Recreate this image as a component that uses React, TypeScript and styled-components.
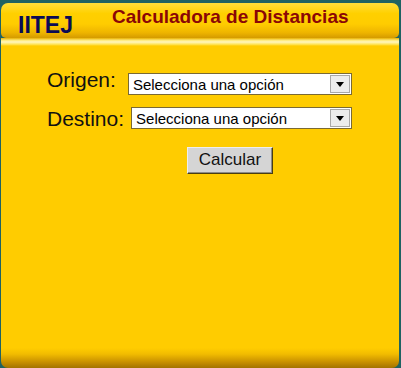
import React from 'react'
import styled, { createGlobalStyle } from 'styled-components'

//-----------------------------------------------------------------------------------------------
// global
//-----------------------------------------------------------------------------------------------
const GlobalStyle = createGlobalStyle`
  html, body {
    margin: 0;
    padding: 0;
    background: #1f6262;
  }
  body {
    font-family: "Liberation Sans", Arial, sans-serif;
  }
`

const Page = styled.div`
  width: 401px;
  height: 368px;
  box-sizing: border-box;
  padding: 3px 2px 0 1px;
  display: flex;
  flex-direction: column;
  background: #1f6262;
`

const Header = styled.div`
  height: 35px;
  display: flex;
  align-items: center;
  padding: 0 0 2px 17px;
  box-sizing: border-box;
  border-radius: 7px 7px 5px 5px;
  background: linear-gradient(
    to bottom,
    #ffde3a 0%,
    #ffd000 30%,
    #ffcc00 60%,
    #eeb400 85%,
    #d49a00 100%
  );
`

const Logo = styled.span`
  font-size: 23px;
  font-weight: bold;
  color: #0b0b55;
  margin-top: 11px;
  width: 94px;
`

const Title = styled.span`
  font-size: 19px;
  font-weight: bold;
  color: #8a0606;
  margin-top: -6px;
`

const Shine = styled.div`
  height: 8px;
  background: linear-gradient(
    to bottom,
    #e9b000 0%,
    #ffeb80 30%,
    #fff6c0 50%,
    #ffe455 80%,
    #ffcc00 100%
  );
`

const Body = styled.div`
  flex: 1;
  border-radius: 0 0 7px 7px;
  background: linear-gradient(
    to bottom,
    #ffcc00 0%,
    #ffcc00 calc(100% - 20px),
    #f2bc00 calc(100% - 14px),
    #c89000 calc(100% - 6px),
    #a37300 100%
  );
  padding: 26px 0 0 46px;
`

const Row = styled.div`
  display: flex;
  align-items: center;
  height: 24px;
  margin-bottom: 10px;
`

const Label = styled.label<{ $lift: number; $gap: number }>`
  font-size: 21px;
  line-height: 24px;
  color: #111;
  margin-bottom: ${(p) => p.$lift}px;
  margin-right: ${(p) => p.$gap}px;
`

const SelectBox = styled.div<{ $width: number }>`
  width: ${(p) => p.$width}px;
  height: 22px;
  box-sizing: border-box;
  display: flex;
  align-items: stretch;
  background: #fff;
  border: 1px solid #7a6a34;
`

const NativeSelect = styled.select`
  flex: 1;
  min-width: 0;
  appearance: none;
  border: none;
  outline: none;
  background: transparent;
  font-family: "Liberation Sans", Arial, sans-serif;
  font-size: 15px;
  color: #000;
  padding: 0 0 0 4px;
  margin: 0;
`

const ArrowButton = styled.div`
  width: 20px;
  margin: 1px;
  box-sizing: border-box;
  border: 1px solid #a8a8a8;
  background: #ececec;
  display: flex;
  align-items: center;
  justify-content: center;
`

const Arrow = styled.span`
  width: 0;
  height: 0;
  border-left: 4px solid transparent;
  border-right: 4px solid transparent;
  border-top: 5px solid #000;
`

const ButtonRow = styled.div`
  padding: 7px 0 0 140px;
`

const Button = styled.button`
  width: 86px;
  height: 27px;
  box-sizing: border-box;
  font-family: "Liberation Sans", Arial, sans-serif;
  font-size: 17px;
  color: #111;
  background: #d5d5d5;
  border: 1px solid;
  border-color: #eeeeee #4a3e10 #4a3e10 #eeeeee;
  box-shadow: inset -1px -1px 0 #8a8a8a;
  padding: 0 0 2px;
  cursor: pointer;
`

const ciudades = ['Selecciona una opción']

interface SelectProps {
  id: string
  width: number
}

//-----------------------------------------------------------------------------------------------
// Dropdown
//-----------------------------------------------------------------------------------------------
const Dropdown: React.FunctionComponent<SelectProps> = ({ id, width }) => (
  <SelectBox $width={width}>
    <NativeSelect id={id}>
      {ciudades.map((c) => (
        <option key={c}>{c}</option>
      ))}
    </NativeSelect>
    <ArrowButton>
      <Arrow />
    </ArrowButton>
  </SelectBox>
)

//-----------------------------------------------------------------------------------------------
// render
//-----------------------------------------------------------------------------------------------
const App: React.FunctionComponent = () => {
  return (
    <>
      <GlobalStyle />
      <Page>
        <Header>
          <Logo>IITEJ</Logo>
          <Title>Calculadora de Distancias</Title>
        </Header>
        <Shine />
        <Body>
          <Row>
            <Label htmlFor="origen" $lift={8} $gap={12}>Origen:</Label>
            <Dropdown id="origen" width={224} />
          </Row>
          <Row>
            <Label htmlFor="destino" $lift={-2} $gap={7}>Destino:</Label>
            <Dropdown id="destino" width={221} />
          </Row>
          <ButtonRow>
            <Button>Calcular</Button>
          </ButtonRow>
        </Body>
      </Page>
    </>
  )
}

export default App
